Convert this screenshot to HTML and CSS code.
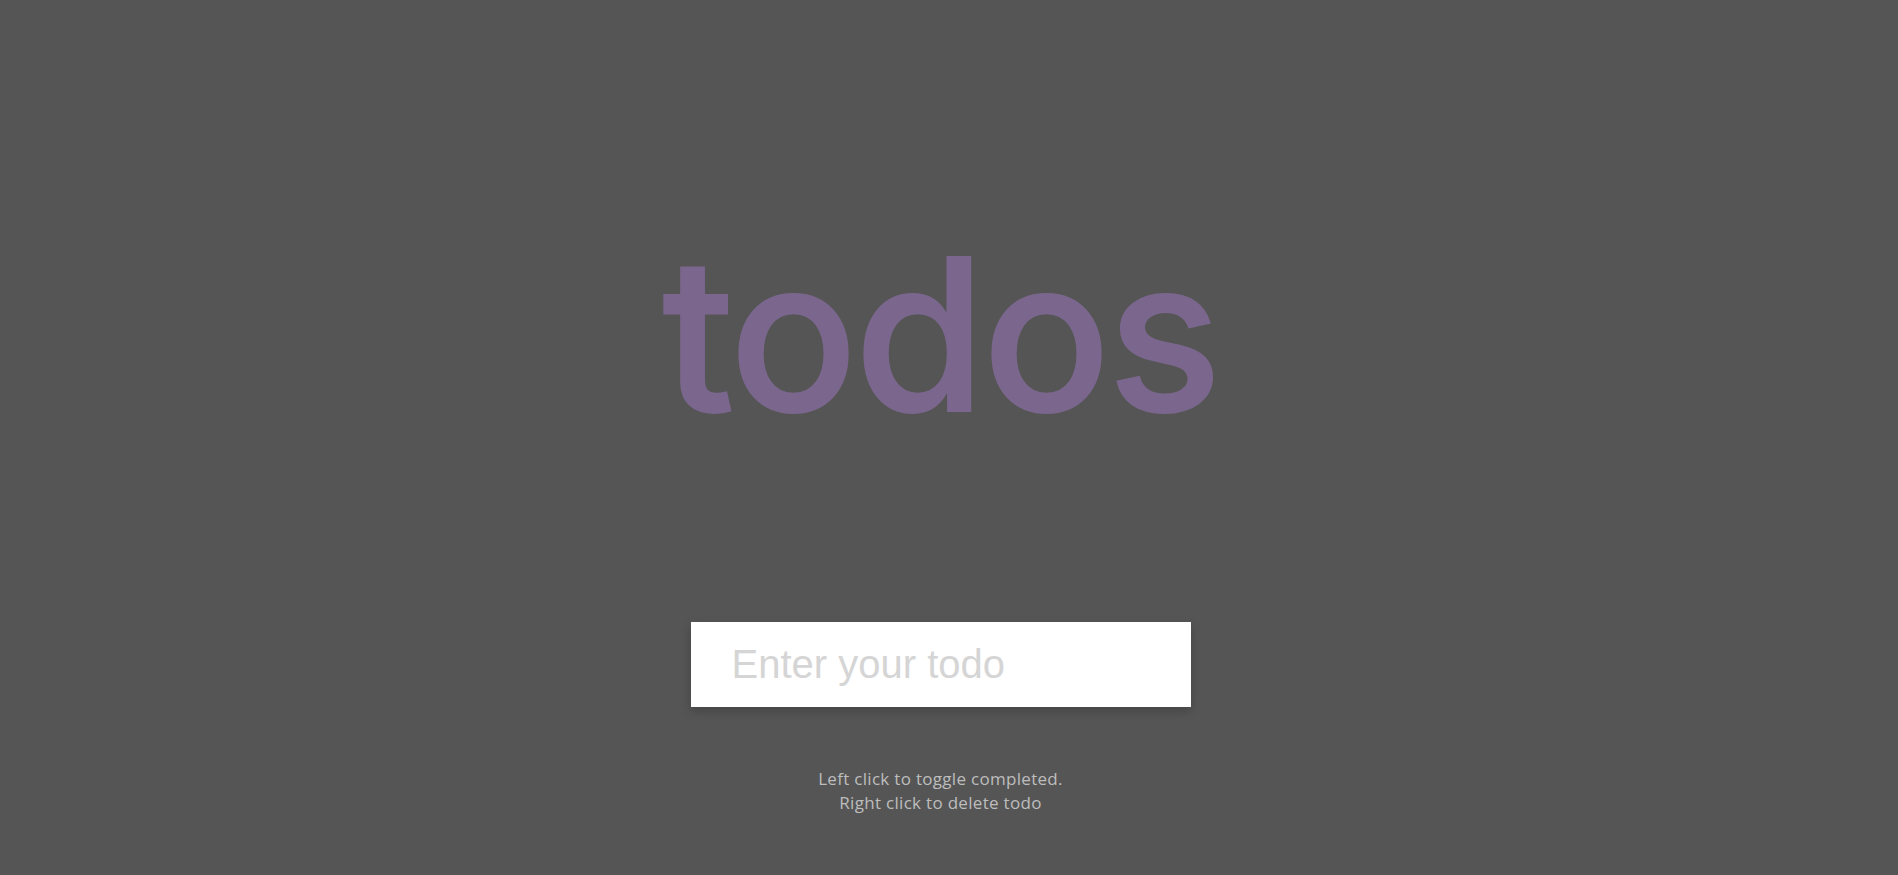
FILE: index.html
```html
<!DOCTYPE html>
<html lang="en">
<head>
<meta charset="utf-8">
<title>todos</title>
<link rel="stylesheet" href="styles.css">
</head>
<body>
<main class="app">
  <h1 class="title">todos</h1>
  <form class="todo-form" onsubmit="return false">
    <input class="todo-input" type="text" placeholder="Enter your todo" autocomplete="off">
  </form>
  <ul class="todo-list"></ul>
  <p class="hint">Left click to toggle completed.<br>Right click to delete todo</p>
</main>
</body>
</html>
```
FILE: styles.css
```css
* {
  box-sizing: border-box;
}

html, body {
  margin: 0;
  padding: 0;
}

body {
  background: #555555;
  min-height: 100vh;
  font-family: "Open Sans", "Liberation Sans", sans-serif;
}

.app {
  display: flex;
  flex-direction: column;
  align-items: center;
  padding-top: 227px;
  padding-right: 17px;
}

.title {
  margin: 0;
  font-family: Inter, "Liberation Sans", sans-serif;
  font-weight: 500;
  font-size: 212px;
  line-height: 214px;
  letter-spacing: -3px;
  color: #7b678e;
  -webkit-text-stroke: 2px #7b678e;
}

.todo-form {
  margin-top: 181px;
}

.todo-input {
  display: block;
  width: 500px;
  height: 85px;
  padding: 0 41px;
  border: none;
  outline: none;
  background: #ffffff;
  font-family: "Liberation Sans", Arial, sans-serif;
  font-size: 40px;
  color: #333333;
  box-shadow: 0 4px 10px rgba(0, 0, 0, 0.2);
}

.todo-input::placeholder {
  color: #d5d5d5;
}

.todo-list {
  margin: 0;
  padding: 0;
  list-style: none;
}

.hint {
  margin: 60px 0 0;
  text-align: center;
  font-size: 17px;
  line-height: 24px;
  letter-spacing: 0.3px;
  color: #bdbdbd;
}
```
